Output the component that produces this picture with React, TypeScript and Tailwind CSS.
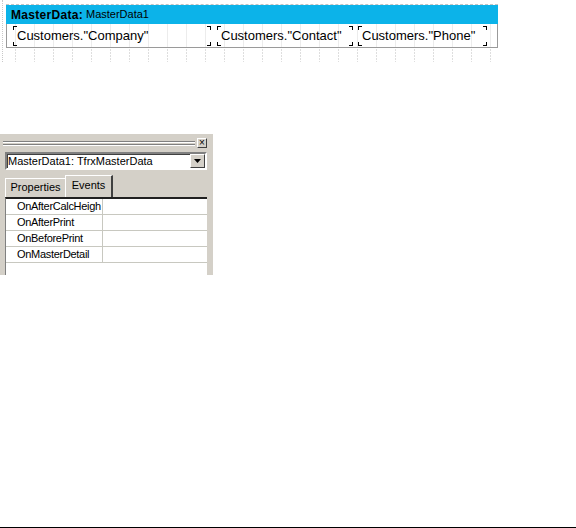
import React from "react";

function Corners() {
  return (
    <>
      <span className="absolute left-0 top-0 w-[4px] h-[4px] border-l border-t border-black" />
      <span className="absolute right-0 top-0 w-[4px] h-[4px] border-r border-t border-black" />
      <span className="absolute left-0 bottom-0 w-[4px] h-[4px] border-l border-b border-black" />
      <span className="absolute right-0 bottom-0 w-[4px] h-[4px] border-r border-b border-black" />
    </>
  );
}

function Memo({ text, w, ml }: { text: string; w: string; ml: string }) {
  return (
    <div className={`relative h-[20px] flex items-center pl-[4px] ${w} ${ml}`}>
      <Corners />
      <span className="text-[13px] leading-[20px] text-black whitespace-nowrap">{text}</span>
    </div>
  );
}

const rows = ["OnAfterCalcHeigh", "OnAfterPrint", "OnBeforePrint", "OnMasterDetail"];

export default function App() {
  return (
    <div className="relative w-[576px] h-[528px] bg-white border-b border-black overflow-hidden font-['Liberation_Sans',Arial,sans-serif]">
      {/* design area */}
      <div className="h-[62px] ml-[2px] pl-[3px] pt-[4px] border-l border-dotted border-[#c8c8c8]">
        <div className="w-[492px] border-t border-dashed border-[#c4c4c4]">
          <div className="h-[19px] bg-[#0cb3e9] pl-[5px] flex items-center text-black whitespace-nowrap">
            <span className="font-bold text-[12px] tracking-[0.3px]">MasterData:</span>
            <span className="text-[11px] ml-[3px]">MasterData1</span>
          </div>
          <div className="h-[24px] border-l border-r border-b border-[#9a9a9a] flex items-center pl-[6px] bg-[linear-gradient(to_right,#ececec_1px,transparent_1px)] bg-[length:19px_100%] bg-[position:8px_0]">
            <Memo text={'Customers."Company"'} w="w-[198px]" ml="ml-0" />
            <Memo text={'Customers."Contact"'} w="w-[136px]" ml="ml-[6px]" />
            <Memo text={'Customers."Phone"'} w="w-[129px]" ml="ml-[5px]" />
          </div>
          <div className="h-[14px] bg-[linear-gradient(to_bottom,#ffffff_50%,transparent_50%),linear-gradient(to_right,#dedede_1px,transparent_1px)] bg-[length:100%_3px,19px_100%] bg-[position:0_0,9px_0]" />
        </div>
      </div>

      {/* object inspector */}
      <div className="mt-[72px] w-[213px] h-[141px] bg-[#d4d0c8] pt-[4px] pl-[3px] pr-[6px] flex flex-col text-[11px] text-black overflow-hidden">
        <div className="flex items-center h-[10px] gap-[2px]">
          <div className="flex-1 flex flex-col gap-[1px]">
            <div className="h-[2px] border-t border-[#808080] border-b border-b-white" />
            <div className="h-[2px] border-t border-[#808080] border-b border-b-white" />
          </div>
          <div className="w-[10px] h-[10px] border border-t-white border-l-white border-r-[#404040] border-b-[#404040] flex items-center justify-center text-[10px] leading-none">
            ×
          </div>
        </div>
        <div className="mt-[4px] ml-[2px] w-[202px] h-[18px] bg-white border-2 border-t-[#808080] border-l-[#808080] border-r-white border-b-white shadow-[inset_1px_1px_0_#404040] flex items-center">
          <span className="flex-1 pl-[1px] whitespace-nowrap text-[11px]">MasterData1: TfrxMasterData</span>
          <div className="w-[15px] h-[14px] bg-[#d4d0c8] border border-t-white border-l-white border-r-[#404040] border-b-[#404040] flex items-center justify-center">
            <svg width="7" height="4" viewBox="0 0 7 4"><path d="M0 0h7L3.5 4z" fill="#000" /></svg>
          </div>
        </div>
        <div className="mt-[5px] ml-[2px] h-[22px] flex items-end">
          <div className="h-[19px] w-[60px] border-t border-l border-white flex items-center justify-center pb-[1px]">Properties</div>
          <div className="h-[22px] w-[48px] border-t border-l border-white border-r-2 border-r-[#404040] flex items-center justify-center pb-[3px]">Events</div>
        </div>
        <div className="ml-[2px] w-[202px] flex-1 bg-white border-t-2 border-t-[#202020] border-l border-l-[#808080]">
          {rows.map((r) => (
            <div key={r} className="h-[16px] flex border-b border-[#c8c8c0]">
              <div className="w-[97px] shrink-0 pl-[11px] border-r border-[#c8c8c0] whitespace-nowrap leading-[15px] tracking-[-0.3px]">{r}</div>
              <div className="flex-1" />
            </div>
          ))}
        </div>
      </div>
    </div>
  );
}
